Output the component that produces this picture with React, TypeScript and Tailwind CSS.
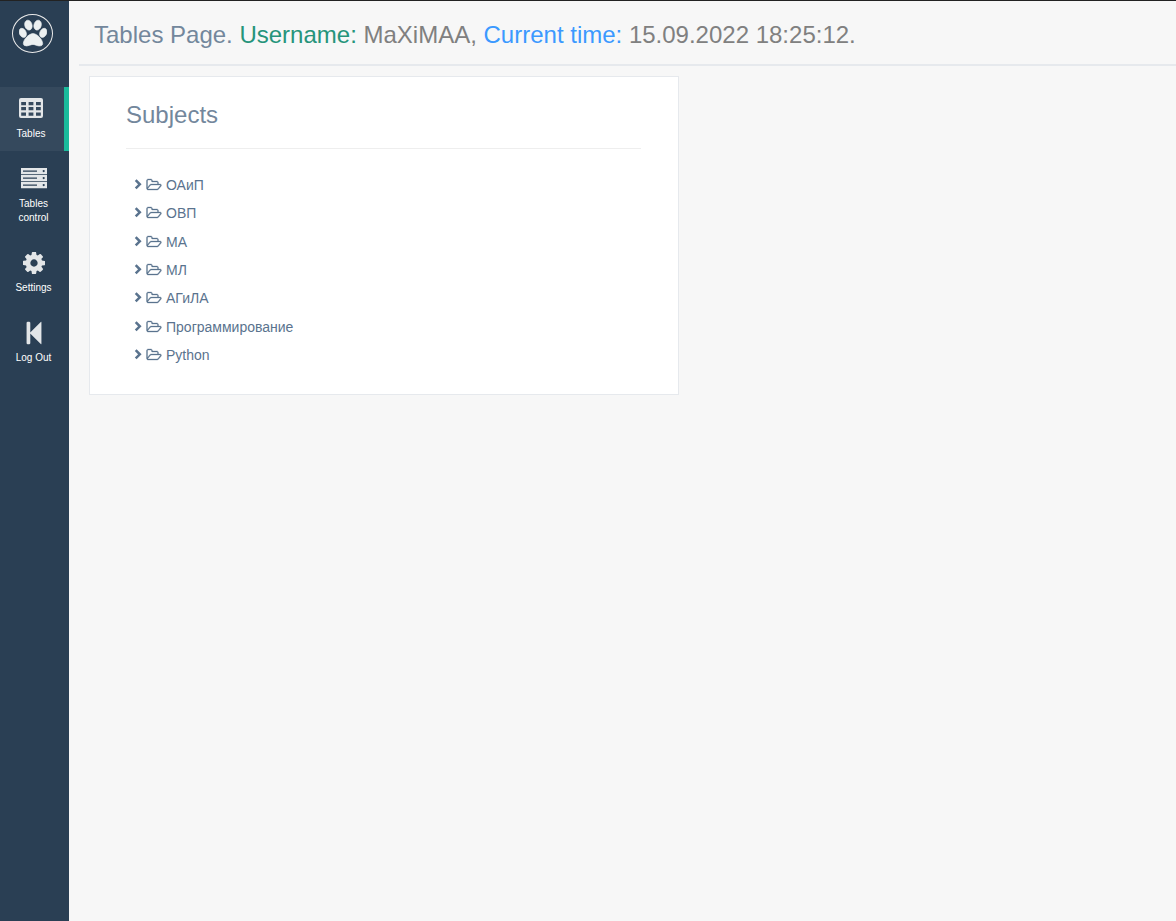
import type { ReactNode } from "react";

function PawIcon() {
  return (
    <svg aria-hidden="true" viewBox="0 0 1664 1792" className="h-[30px] w-7 fill-[#ECF0F1]">
      <path
        className="stroke-[#ECF0F1] stroke-[40]"
        d="M780 417q0 60-19 113.5t-63 92.5-105 39q-76 0-138-57.5t-92-135.5-30-151q0-60 19-113.5t63-92.5 105-39q77 0 138.5 57.5t91.5 135 30 151.5zm-342 483q0 80-42 139t-119 59q-76 0-141.5-55.5t-100.5-133.5-35-152q0-80 42-139.5t119-59.5q76 0 141.5 55.5t100.5 134 35 152.5zm394-27q118 0 255 97.5t229 237 92 254.5q0 46-17 76.5t-48.5 45-64.5 20-76 5.5q-68 0-187.5-45t-182.5-45q-66 0-192.5 44.5t-200.5 44.5q-183 0-183-146 0-86 56-191.5t139.5-192.5 187.5-146 193-59zm239-211q-61 0-105-39t-63-92.5-19-113.5q0-74 30-151.5t91.5-135 138.5-57.5q61 0 105 39t63 92.5 19 113.5q0 73-30 151t-92 135.5-138 57.5zm432-104q77 0 119 59.5t42 139.5q0 74-35 152t-100.5 133.5-141.5 55.5q-77 0-119-59t-42-139q0-74 35-152.5t100.5-134 141.5-55.5z"
      />
    </svg>
  );
}

function TableIcon() {
  const columns = [2.2, 9.6, 17];
  const rows = [4, 9, 14.6];
  const cells = rows.map((y) => columns.map((x) => `M${x} ${y}h4.8v3.2h-4.8z`).join("")).join("");
  return (
    <svg aria-hidden="true" viewBox="0 0 24 22" className="h-[22px] w-6 fill-current">
      <path fillRule="evenodd" d={`M2 0h20q2 0 2 2v16q0 2-2 2h-20q-2 0-2-2v-16q0-2 2-2z${cells}`} />
    </svg>
  );
}

function ServerIcon() {
  const units = [0, 7, 14];
  return (
    <svg aria-hidden="true" viewBox="0 0 26 22" className="h-[22px] w-[26px] fill-current">
      <path
        fillRule="evenodd"
        d={units
          .map((y) => `M0 ${y}h26v6.2h-26zM2 ${y + 2.4}h14v1.4h-14zM21.6 ${y + 3.1}a1.1 1.1 0 1 0 2.2 0a1.1 1.1 0 1 0-2.2 0z`)
          .join("")}
      />
    </svg>
  );
}

function CogIcon() {
  return (
    <svg aria-hidden="true" viewBox="128 128 1536 1536" className="size-[22px] fill-current">
      <path d="M1152 896q0-106-75-181t-181-75-181 75-75 181 75 181 181 75 181-75 75-181zm512-109v222q0 12-8 23t-20 13l-185 28q-19 54-39 91 35 50 107 138 10 12 10 25t-9 23q-27 37-99 108t-94 71q-12 0-26-9l-138-108q-44 23-91 38-16 136-29 186-7 28-36 28h-222q-14 0-24.5-8.5t-11.5-21.5l-28-184q-49-16-90-37l-141 107q-10 9-25 9-14 0-25-11-126-114-165-168-7-10-7-23 0-12 8-23 15-21 51-66.5t54-70.5q-27-50-41-99l-183-27q-13-2-21-12.5t-8-23.5v-222q0-12 8-23t19-13l186-28q14-46 39-92-40-57-107-138-10-12-10-24 0-10 9-23 26-36 98.5-107.5t94.5-71.5q13 0 26 10l138 107q44-23 91-38 16-136 29-186 7-28 36-28h222q14 0 24.5 8.5t11.5 21.5l28 184q49 16 90 37l142-107q9-9 24-9 13 0 25 10 129 119 165 170 7 8 7 22 0 12-8 23-15 21-51 66.5t-54 70.5q26 50 41 98l183 28q13 2 21 12.5t8 23.5z" />
    </svg>
  );
}

function StepBackIcon() {
  return (
    <svg aria-hidden="true" viewBox="0 0 1024 1792" className="h-[26px] w-4 fill-current">
      <path d="M979 141q19-19 32-13t13 32v1472q0 26-13 32t-32-13l-710-710q-9-9-13-19v678q0 26-19 45t-45 19h-128q-26 0-45-19t-19-45v-1408q0-26 19-45t45-19h128q26 0 45 19t19 45v678q4-10 13-19z" />
    </svg>
  );
}

function ChevronIcon() {
  return (
    <svg aria-hidden="true" viewBox="0 0 8 12" className="h-3 w-2 fill-none stroke-current stroke-[2.5]">
      <path d="M1.7 1.2L5.8 5.3L1.7 9.4" />
    </svg>
  );
}

function FolderIcon() {
  return (
    <svg
      aria-hidden="true"
      viewBox="64 0 1920 1792"
      className="ml-1 h-3.5 w-4 fill-current stroke-current stroke-[40]"
    >
      <path d="M1845 931q0-35-53-35h-1088q-40 0-85.5 21.5t-71.5 52.5l-294 363q-18 24-18 40 0 35 53 35h1088q40 0 86-22t71-53l294-363q18-22 18-39zm-1141-163h768v-160q0-40-28-68t-68-28h-576q-40 0-68-28t-28-68v-64q0-40-28-68t-68-28h-320q-40 0-68 28t-28 68v853l256-315q44-53 116-87.5t140-34.5zm1269 163q0 62-46 120l-295 363q-43 53-116 87.5t-140 34.5h-1088q-92 0-158-66t-66-158v-960q0-92 66-158t158-66h320q92 0 158 66t66 158v32h544q92 0 158 66t66 158v160h192q54 0 99 24.5t67 70.5q15 32 15 68z" />
    </svg>
  );
}

function NavItem({ icon, label, active = false }: { icon: ReactNode; label: string; active?: boolean }) {
  return (
    <li>
      <a
        href="#"
        aria-current={active ? "page" : undefined}
        className={`flex flex-col items-center gap-[5px] pt-[9px] pr-0.5 pb-2.5 text-center text-[10px] leading-[14px] text-white ${
          active ? "border-r-[5px] border-[#1ABB9C] bg-[#35495D]" : ""
        }`}
      >
        <span className="flex h-[26px] items-center text-[#E3E6E8]">{icon}</span>
        <span className="max-w-12">{label}</span>
      </a>
    </li>
  );
}

const subjects = ["ОАиП", "ОВП", "МА", "МЛ", "АГиЛА", "Программирование", "Python"];

export default function App() {
  return (
    <div className="flex min-h-screen border-t border-[#222222] bg-[#F7F7F7] font-['Liberation_Sans',Arial,sans-serif] text-[#73879C]">
      <aside className="w-[69px] shrink-0 bg-[#2A3F54]">
        <a
          href="#"
          aria-label="Home"
          className="mt-[13px] ml-3 flex h-[39px] w-[41px] items-center justify-center rounded-[50%] border border-[#EAEAEA]"
        >
          <PawIcon />
        </a>
        <nav className="mt-[34px]">
          <ul className="flex flex-col gap-1.5">
            <NavItem icon={<TableIcon />} label="Tables" active />
            <NavItem icon={<ServerIcon />} label="Tables control" />
            <NavItem icon={<CogIcon />} label="Settings" />
            <NavItem icon={<StepBackIcon />} label="Log Out" />
          </ul>
        </nav>
      </aside>

      <main className="min-w-0 flex-1 pl-2.5">
        <header className="border-b-2 border-[#E6E9ED] px-[15px] pt-[18px] pb-[13px]">
          <h1 className="text-2xl">
            Tables Page. <span className="text-[#26947B]">Username:</span>{" "}
            <span className="text-[#808080]">MaXiMAA,</span>{" "}
            <span className="text-[#3B99FF]">Current time:</span>{" "}
            <span className="text-[#808080]">15.09.2022 18:25:12.</span>
          </h1>
        </header>

        <section className="mx-2.5 mt-2.5 max-w-[590px] border border-[#E6E9ED] bg-white pt-[22px] pr-[37px] pb-[25px] pl-9">
          <h2 className="border-b border-[#EEEEEE] pb-[17px] text-2xl">Subjects</h2>
          <ul className="mt-[22px] flex h-[198px] flex-col justify-between pl-2 text-sm text-[#5A738E]">
            {subjects.map((subject) => (
              <li key={subject}>
                <button type="button" className="flex h-7 items-center">
                  <ChevronIcon />
                  <FolderIcon />
                  <span className="ml-1">{subject}</span>
                </button>
              </li>
            ))}
          </ul>
        </section>
      </main>
    </div>
  );
}
